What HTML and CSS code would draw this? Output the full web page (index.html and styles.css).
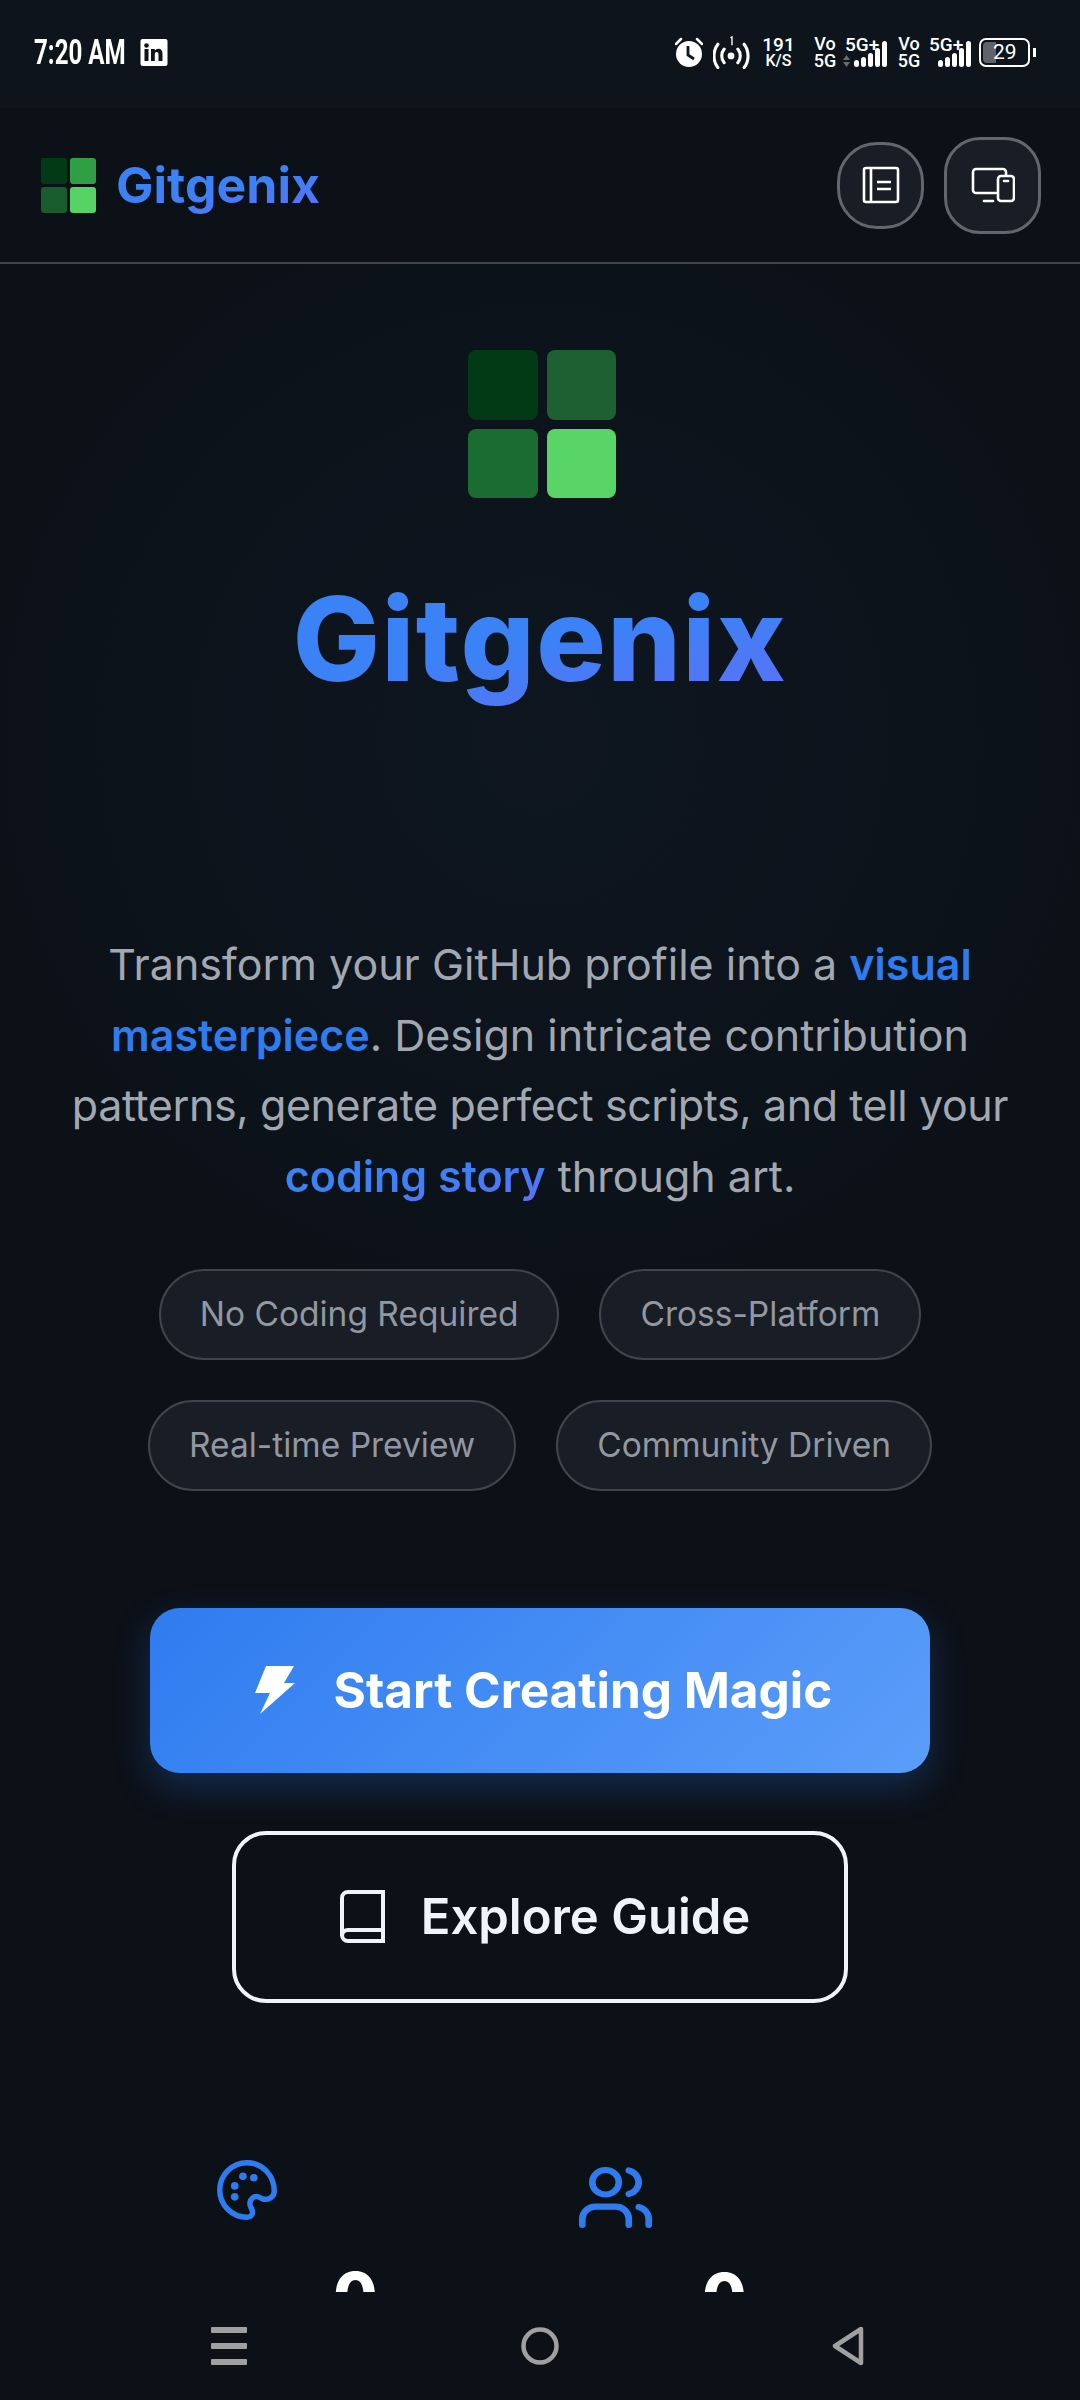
FILE: index.html
```html
<!DOCTYPE html>
<html lang="en">
<head>
  <meta charset="utf-8">
  <title>Gitgenix</title>
  <link rel="stylesheet" href="styles.css">
</head>
<body>
  <div class="app">
    <div class="status-bar">
      <div class="status-left">
        <span class="clock">7:20 AM</span>
        <svg class="linkedin" viewBox="0 0 27 27"><rect width="27" height="27" rx="2" fill="#fff"/><rect x="4" y="10" width="4" height="12" fill="#0d141b"/><circle cx="6" cy="6.5" r="2.3" fill="#0d141b"/><path d="M10.5 10h3.8v1.7c.8-1.3 2-2 3.6-2 3 0 4.100 2 4.100 5V22h-4v-6.400c0-1.500-.5-2.500-1.800-2.500s-1.900 1-1.900 2.500V22h-3.800z" fill="#0d141b"/></svg>
      </div>
      <div class="status-right">
        <svg class="alarm" viewBox="0 0 28 30"><path d="M1 7l5-5M27 7l-5-5" stroke="#fff" stroke-width="2.500" stroke-linecap="round"/><circle cx="14" cy="17" r="13" fill="#fff"/><path d="M13 9v9l6 4" stroke="#0d141b" stroke-width="2.800" fill="none"/></svg>
        <svg class="hotspot" viewBox="0 0 38 33"><circle cx="18.500" cy="20" r="3.500" fill="#fff"/><path d="M11.500 13a11 11 0 0 0 0 14M25.500 13a11 11 0 0 1 0 14M5 8a20 20 0 0 0 0 24M32 8a20 20 0 0 1 0 24" stroke="#fff" stroke-width="3.200" fill="none" stroke-linecap="round"/><path d="M18 1.500l1.500-1V9" stroke="#fff" stroke-width="1.400" fill="none"/></svg>
        <div class="stack speed"><span>191</span><small>K/S</small></div>
        <div class="stack volte volte-first"><span>Vo</span><span>5G</span></div>
        <div class="signal signal-first">
          <span class="signal-label">5G+</span>
          <svg class="arrows" viewBox="0 0 7 12"><path d="M3.500 0L7 5H0zM3.500 12L0 7h7z" fill="#676b72"/></svg>
          <svg class="bars" viewBox="0 0 33 26"><rect x="0" y="19" width="5" height="7" rx="2.500" fill="#fff"/><rect x="7" y="16" width="5" height="10" rx="2.500" fill="#fff"/><rect x="14" y="12" width="5" height="14" rx="2.500" fill="#fff"/><rect x="21" y="7" width="5" height="19" rx="2.500" fill="#fff"/><rect x="28" y="0" width="5" height="26" rx="2.500" fill="#fff"/></svg>
        </div>
        <div class="stack volte"><span>Vo</span><span>5G</span></div>
        <div class="signal">
          <span class="signal-label">5G+</span>
          <svg class="bars" viewBox="0 0 33 26"><rect x="0" y="19" width="5" height="7" rx="2.500" fill="#fff"/><rect x="7" y="16" width="5" height="10" rx="2.500" fill="#fff"/><rect x="14" y="12" width="5" height="14" rx="2.500" fill="#fff"/><rect x="21" y="7" width="5" height="19" rx="2.500" fill="#fff"/><rect x="28" y="0" width="5" height="26" rx="2.500" fill="#fff"/></svg>
        </div>
        <div class="battery"><div class="battery-body"><span class="battery-fill"></span><span class="battery-level">29</span></div><span class="battery-cap"></span></div>
      </div>
    </div>

    <header class="topbar">
      <div class="brand">
        <div class="mark mark-small">
          <span class="cell c1"></span><span class="cell c3"></span>
          <span class="cell c2"></span><span class="cell c4"></span>
        </div>
        <span class="brand-name gradient-text">Gitgenix</span>
      </div>
      <div class="topbar-actions">
        <button class="icon-btn">
          <svg width="38" height="38" viewBox="0 0 38 38" fill="none" stroke="#fff" stroke-width="2.600"><rect x="2" y="2" width="34" height="34" rx="2"/><path d="M9 2v34M15 16h14M15 23h14"/></svg>
        </button>
        <button class="icon-btn icon-btn-large">
          <svg width="44" height="36" viewBox="0 0 44 36" fill="none" stroke="#fff" stroke-width="2.600" stroke-linecap="round"><path d="M25 26H5a3 3 0 0 1-3-3V5a3 3 0 0 1 3-3h27a3 3 0 0 1 3 3v3"/><path d="M13 34h9"/><rect x="27" y="9" width="16" height="25" rx="3"/><path d="M33 14h4"/></svg>
        </button>
      </div>
    </header>

    <main class="content">
      <div class="mark mark-large">
        <span class="cell h1"></span><span class="cell h3"></span>
        <span class="cell h2"></span><span class="cell h4"></span>
      </div>
      <h1 class="title gradient-text">Gitgenix</h1>
      <p class="intro">Transform your GitHub profile into a <b class="accent">visual<br>masterpiece</b>. Design intricate contribution<br><span class="tight">patterns, generate perfect scripts, and tell your</span><br><b class="gradient-text">coding story</b> through art.</p>

      <div class="chips">
        <span class="chip">No Coding Required</span>
        <span class="chip">Cross-Platform</span>
        <span class="chip">Real-time Preview</span>
        <span class="chip">Community Driven</span>
      </div>

      <div class="actions">
        <a class="btn btn-primary">
          <svg width="42" height="48" viewBox="0 0 42 48"><path d="M12 0H40L30 17H41L6 48L16 27H1Z" fill="#fff"/></svg>
          Start Creating Magic
        </a>
        <a class="btn btn-secondary">
          <svg width="45" height="53" viewBox="0 0 45 53" fill="none" stroke="#f0f3fb" stroke-width="4"><path d="M43 2H8a6 6 0 0 0-6 6v37a6 6 0 0 0 6 6h35z"/><path d="M2 46a6 6 0 0 1 6-6h35"/></svg>
          Explore Guide
        </a>
      </div>

      <div class="stats">
        <div class="stat stat-palette">
          <svg class="stat-icon" width="60" height="60" viewBox="1 1 22 22" fill="none" stroke="#2f7cf0" stroke-width="2"><path d="M12 2C6.500 2 2 6.500 2 12s4.500 10 10 10c1.400 0 2.200-1 2-2.200-.3-1.300-1.200-2-.9-3.300.3-1.200 1.300-2.200 2.500-2.100.9 0 1.300.6 2.200.9 1.600.4 4.200-.4 4.200-2.800C22 6.500 17.500 2 12 2z"/><g fill="#2f7cf0" stroke="none"><circle cx="10.500" cy="7" r="1.400"/><circle cx="14.500" cy="7.500" r="1.400"/><circle cx="7.500" cy="10.500" r="1.400"/><circle cx="7.500" cy="14.500" r="1.400"/></g></svg>
          <div class="stat-value">0</div>
        </div>
        <div class="stat stat-users">
          <svg class="stat-icon" width="73" height="61" viewBox="1 2 22 20" preserveAspectRatio="none" fill="none" stroke="#2f7cf0" stroke-width="2" stroke-linecap="round"><circle cx="9" cy="7" r="4"/><path d="M16 21v-2a4 4 0 0 0-4-4H6a4 4 0 0 0-4 4v2"/><path d="M16 3.130a4 4 0 0 1 0 7.740"/><path d="M22 21v-2a4 4 0 0 0-3-3.870"/></svg>
          <div class="stat-value">0</div>
        </div>
      </div>
    </main>

    <nav class="navbar">
      <svg width="36" height="38" viewBox="0 0 36 38" fill="#a0a0a0"><rect width="36" height="6" rx="1"/><rect y="16" width="36" height="6" rx="1"/><rect y="32" width="36" height="6" rx="1"/></svg>
      <svg width="38" height="38" viewBox="0 0 38 38" fill="none" stroke="#a0a0a0" stroke-width="4.500"><circle cx="19" cy="19" r="16.500"/></svg>
      <svg width="32" height="40" viewBox="0 0 32 40" fill="none" stroke="#a0a0a0" stroke-width="4.500" stroke-linejoin="round"><path d="M29 3L3 20l26 17z"/></svg>
    </nav>
  </div>
</body>
</html>
```

FILE: styles.css
```css
* {
  box-sizing: border-box;
}

body {
  margin: 0;
  background: #0c1118;
  font-family: "Inter", "Liberation Sans", sans-serif;
  color: #fff;
}

.app {
  width: 1080px;
  height: 2400px;
  display: flex;
  flex-direction: column;
  overflow: hidden;
}

/* status bar */
.status-bar {
  height: 108px;
  flex: none;
  padding: 0 44px 4px 34px;
  display: flex;
  align-items: center;
  justify-content: space-between;
  background: #0d141b;
  font-family: "Roboto", sans-serif;
}

.status-left {
  display: flex;
  align-items: center;
}

.clock {
  width: 91px;
  margin-right: 15px;
  font-size: 35px;
  font-weight: 700;
  white-space: nowrap;
  transform: scaleX(0.69);
  transform-origin: left center;
}

.linkedin {
  width: 28px;
  height: 27px;
}

.status-right {
  display: flex;
  align-items: center;
}

.alarm {
  width: 28px;
  height: 30px;
  margin-right: 10px;
}

.hotspot {
  width: 37px;
  height: 33px;
  margin-right: 15px;
}

.stack {
  display: flex;
  flex-direction: column;
  align-items: center;
  font-size: 19px;
  font-weight: 500;
  line-height: 17px;
}

.stack small {
  font-size: 16px;
  line-height: 15px;
}

.speed {
  width: 27px;
  margin-right: 22px;
}

.volte {
  width: 22px;
  font-size: 18px;
  margin-right: 9px;
}

.volte-first {
  margin-right: 7px;
}

.signal {
  width: 42px;
  height: 30px;
  margin-right: 8px;
  display: flex;
  align-items: flex-end;
  justify-content: flex-end;
  gap: 4px;
  position: relative;
}

.signal-first {
  width: 44px;
  margin-right: 11px;
}

.signal-first .signal-label {
  left: 2px;
}

.signal-label {
  position: absolute;
  top: -1px;
  left: 0;
  font-size: 19px;
  line-height: 17px;
  font-weight: 500;
}

.arrows {
  width: 7px;
  height: 12px;
}

.bars {
  width: 33px;
  height: 26px;
}

.battery {
  display: flex;
  align-items: center;
  gap: 3px;
}

.battery-body {
  width: 51px;
  height: 29px;
  border: 2px solid #fff;
  border-radius: 7px;
  padding-left: 2px;
  display: flex;
  align-items: center;
  position: relative;
}

.battery-fill {
  width: 13px;
  height: 21px;
  background: #5f636b;
  border-radius: 4px 0 0 4px;
}

.battery-level {
  position: absolute;
  left: 12px;
  top: 1px;
  font-size: 21px;
  line-height: 23px;
}

.battery-cap {
  width: 3px;
  height: 9px;
  background: #fff;
}

/* header */
.topbar {
  height: 156px;
  flex: none;
  padding: 0 39px 0 41px;
  display: flex;
  align-items: center;
  justify-content: space-between;
  background: #0c1118;
  border-bottom: 2px solid #41444c;
}

.brand {
  display: flex;
  align-items: center;
  gap: 20px;
}

.brand-name {
  font-size: 50px;
  font-weight: 700;
  line-height: 60px;
}

.gradient-text {
  background: linear-gradient(170deg, #3b82f6 50%, #5f6ff6);
  -webkit-background-clip: text;
  background-clip: text;
  color: transparent;
}

.mark {
  display: grid;
  grid-template-columns: 1fr 1fr;
}

.mark-small {
  width: 55px;
  height: 55px;
  gap: 3px;
}

.mark-large {
  width: 148px;
  height: 148px;
  gap: 9px;
  margin-left: 4px;
}

.cell {
  border-radius: 3px;
}

.mark-large .cell {
  border-radius: 8px;
}

.c1 { background: #033a16; }
.c2 { background: #195c2d; }
.c3 { background: #2ea043; }
.c4 { background: #56d364; }
.h1 { background: #033a16; }
.h2 { background: #1b6c32; }
.h3 { background: #1f6032; }
.h4 { background: #58d566; }

.topbar-actions {
  display: flex;
  align-items: center;
  gap: 20px;
}

.icon-btn {
  width: 87px;
  height: 87px;
  padding: 0;
  display: flex;
  align-items: center;
  justify-content: center;
  background: #191d25;
  border: 3px solid #63666d;
  border-radius: 40px;
}

.icon-btn-large {
  width: 97px;
  height: 97px;
  border-radius: 36px;
}

/* hero */
.content {
  flex: 1;
  min-height: 0;
  overflow: hidden;
  padding-top: 86px;
  display: flex;
  flex-direction: column;
  align-items: center;
  background: radial-gradient(ellipse 620px 620px at 50% 480px, #0e1620, #0c1118);
}

.content > * {
  flex: none;
}

.title {
  margin: 73px 0 0;
  font-size: 116px;
  font-weight: 800;
  letter-spacing: 1.5px;
  line-height: 136px;
}

.intro {
  margin: 222px 0 0;
  font-size: 43px;
  line-height: 70.700px;
  text-align: center;
  color: #a2a8b1;
  white-space: nowrap;
}

.intro b {
  font-weight: 600;
}

.tight {
  letter-spacing: -0.4px;
}

.accent {
  color: #2f7cf0;
}

.chips {
  width: 800px;
  margin-top: 57px;
  display: flex;
  flex-wrap: wrap;
  justify-content: center;
  gap: 40px;
}

.chip {
  height: 91px;
  padding: 0 39px;
  display: flex;
  align-items: center;
  font-size: 33.5px;
  color: #9198a1;
  background: #191d25;
  border: 2px solid #41444c;
  border-radius: 46px;
}

.actions {
  margin-top: 117px;
  display: flex;
  flex-direction: column;
  align-items: center;
  gap: 58px;
}

.btn {
  display: flex;
  align-items: center;
  justify-content: center;
  font-size: 49.5px;
  font-weight: 700;
}

.btn-primary {
  width: 780px;
  height: 165px;
  gap: 38px;
  padding-left: 6px;
  background: linear-gradient(135deg, #2f7cf0, #5b9df9);
  border-radius: 30px;
  box-shadow: 0 14px 36px rgba(47, 124, 240, 0.25);
}

.btn-secondary {
  width: 616px;
  height: 172px;
  gap: 36px;
  padding-left: 10px;
  color: #f0f3fb;
  font-size: 49px;
  font-weight: 600;
  background: #0c1118;
  border: 4px solid #f0f3fb;
  border-radius: 34px;
}

/* stats, cut off by the nav bar */
.stats {
  width: 738px;
  margin-top: 157px;
  display: grid;
  grid-template-columns: 369px 369px;
}

.stat {
  display: flex;
  flex-direction: column;
  align-items: center;
}

.stat-icon {
  align-self: flex-start;
}

.stat-palette .stat-icon {
  margin-left: 46px;
}

.stat-users .stat-icon {
  margin: 7px 0 0 39px;
}

.stat-value {
  margin-top: 38px;
  font-size: 64px;
  font-weight: 800;
  line-height: 76px;
}

.stat-users .stat-value {
  margin-top: 31px;
}

/* android nav */
.navbar {
  height: 108px;
  flex: none;
  padding: 0 216px 0 211px;
  display: flex;
  align-items: center;
  justify-content: space-between;
  background: #0c1118;
}
```
